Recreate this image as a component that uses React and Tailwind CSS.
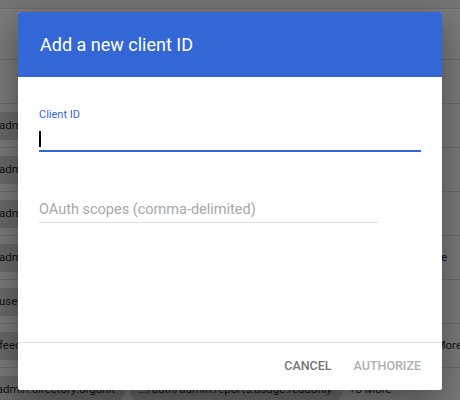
const rows = [
  { left: 'admin.directory.group', right: null },
  { left: 'admin.directory.user', right: null },
  { left: 'admin.directory.device', right: null },
  { left: 'admin.directory.domain', right: '+2 More', rightGap: 'mr-[13px]' },
  { left: 'userinfo.email', right: null },
  { left: 'feeds', right: '+4 More', rightGap: '-mr-[2px]' },
];

const Chip = ({ children, className = '' }) => (
  <span className={`h-[28px] flex items-center rounded-full bg-[#dcdcdc] whitespace-nowrap ${className}`}>
    {children}
  </span>
);

export default function App() {
  return (
    <div
      className="relative w-[460px] h-[400px] overflow-hidden bg-white text-[11.5px] text-[#2a2a2a]"
      style={{ fontFamily: 'Roboto, "Liberation Sans", sans-serif' }}
    >
      {/* page under the dialog */}
      <div className="flex flex-col">
        <div className="h-[9px] border-b border-[#e0e0e0] bg-[#f4f4f4]" />
        <div className="h-[51px] border-b border-[#e0e0e0]" />
        <div className="h-[44px] border-b border-[#e0e0e0]" />
        {rows.map((r, i) => (
          <div key={i} className="h-[44px] border-b border-[#e0e0e0] flex items-center justify-between">
            <Chip className="-ml-[13px] w-[200px] px-3">{r.left}</Chip>
            {r.right && <span className={`whitespace-nowrap ${r.rightGap}`}>{r.right}</span>}
          </div>
        ))}
        <div className="h-[44px] flex items-center gap-[5px]">
          <Chip className="-ml-[14px] w-[139px] justify-end pr-[10px]">admin.directory.orgunit</Chip>
          <Chip className="w-[213px] pl-[8px]">.../auth/admin.reports.usage.readonly</Chip>
          <span className="ml-[1px] whitespace-nowrap">+8 More</span>
        </div>
      </div>

      {/* scrim */}
      <div className="absolute inset-0 bg-black/[0.52]" />

      {/* dialog */}
      <div className="absolute left-[18px] top-[12px] w-[424px] h-[378px] bg-white rounded-[2px] flex flex-col overflow-hidden shadow-[0_12px_36px_rgba(0,0,0,0.4)]">
        <div className="h-[65px] bg-[#3367d6] flex items-center pl-[22px] shrink-0">
          <h2 className="text-[18px] text-white">Add a new client ID</h2>
        </div>

        <div className="flex-1 px-[21px] pt-[30px]">
          <label className="block text-[11px] leading-4 text-[#3367d6]">Client ID</label>
          <div className="h-[29px] border-b-2 border-[#3367d6] flex items-end pb-[3px]">
            <div className="w-[1.5px] h-4 bg-black" />
          </div>

          <div className="mt-[48px] w-[339px] h-[23px] border-b border-[#e0e0e0]">
            <span className="block text-[14.5px] leading-[19px] text-[#a8a8a8]">OAuth scopes (comma-delimited)</span>
          </div>
        </div>

        <div className="h-[48px] border-t border-[#e0e0e0] flex items-center justify-end gap-[22px] pr-[21px] shrink-0">
          <button className="text-[12.5px] font-medium text-[#757575]">CANCEL</button>
          <button className="text-[12.5px] font-medium text-[#b0b0b0]">AUTHORIZE</button>
        </div>
      </div>
    </div>
  );
}
